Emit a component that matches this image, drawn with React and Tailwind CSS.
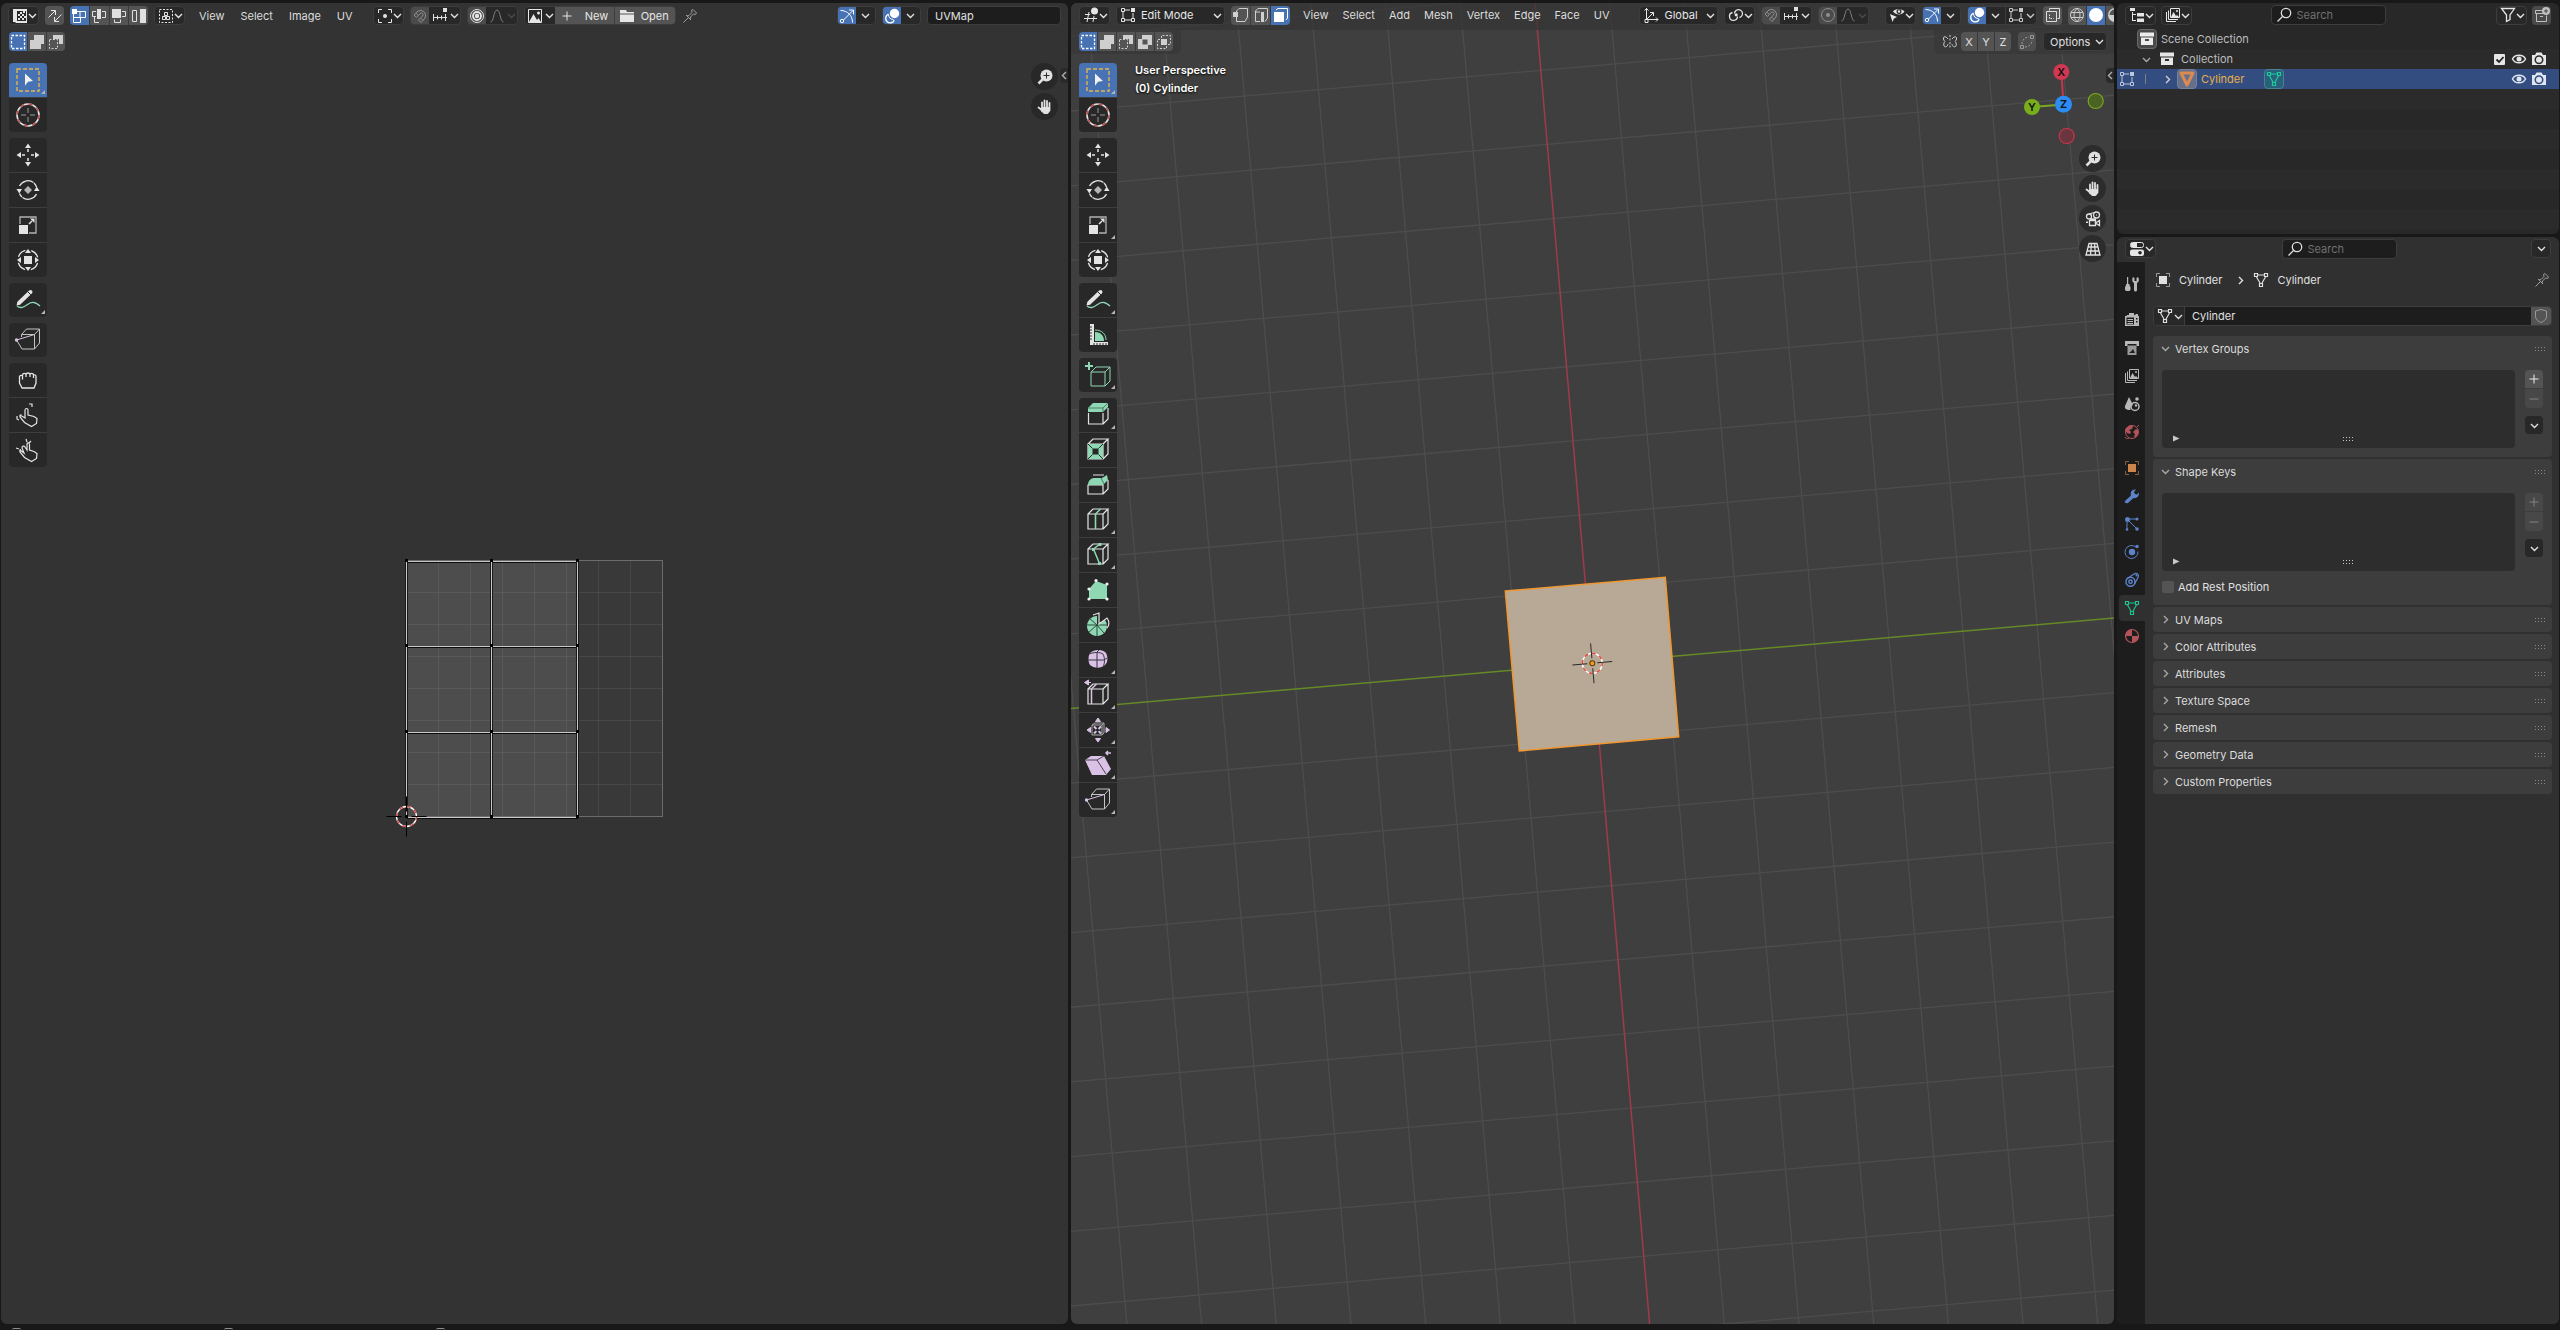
import React from "react";

const F = { fill: "currentColor", stroke: "none" };

const ICONS = {
  uvEditor: (
    <>
      <path {...F} d="M1 1h4v14H3.500v-1H1zM5 1h10v2H5zM5 13h10v2H5zM14 1h1v14h-1z" />
      <path {...F} d="M8 4h2v2H8zM11 3h2v2h-2zM6 6h2v2H6zM10 6h2v2h-2zM8 8h2v2H8zM12 8h2v2h-2zM6 10h2v2H6zM10 10h2v2h-2z" />
    </>
  ),
  sync: <path d="M1.500 9.500L8 3M4 2.500h4.500V7M14.500 6.500L8 13M12 13.500H7.500V9" />,
  uvVertex: (
    <>
      <path {...F} d="M1 1h5v5H1z" />
      <path d="M6 3.500h8.500v6H9.500v5h-7V6M2.500 9.500h7M9 3.500v6" />
    </>
  ),
  uvEdge: (
    <>
      <path {...F} d="M6 1h4v10H6z" />
      <path d="M5 3.500H1.500v5H5M3.500 8.500v6h4.500M11 3.500h3.500v6H11" />
    </>
  ),
  uvFace: (
    <>
      <path {...F} d="M1 1h9v9H1z" />
      <path d="M11 3.500h3.500v5H11M3.500 11.500v3h6v-3" />
    </>
  ),
  uvIsland: (
    <>
      <path {...F} d="M9 1h6v14H9z" />
      <path d="M1.500 2.500h4v11h-4z" />
    </>
  ),
  sticky: (
    <>
      <path d="M1.500 1.500h13v13h-13z" strokeDasharray="2 1.500" />
      <path d="M6.500 4.500h3v3h-3zM4.500 8.500h3v3h-3zM8.500 8.500h3v3h-3z" />
    </>
  ),
  pivot: (
    <>
      <path d="M1.500 5V1.500H5M11 1.500h3.500V5M14.500 11v3.500H11M5 14.500H1.500V11" />
      <circle {...F} cx="8" cy="8" r="2" />
    </>
  ),
  magnet: <path d="M2 7l4-4a5.200 5.200 0 0 1 7 7l-4 4.500-2.500-2.500 4-4a1.700 1.700 0 0 0-2.500-2.500L4.500 9.500zM4 5.200l2.300 2.300M8.500 10l2.500 2.500" />,
  increment: (
    <>
      <path {...F} d="M11 0h4v4h-4z" />
      <path d="M1 9.500h14M1.500 6v7M5.500 7.500v4M9.500 7.500v4M13.500 6v7" />
    </>
  ),
  target: (
    <>
      <circle cx="8" cy="8" r="6.500" />
      <circle cx="8" cy="8" r="4" strokeWidth="1.800" />
      <circle {...F} cx="8" cy="8" r="2.200" />
    </>
  ),
  dotCircle: (
    <>
      <circle cx="8" cy="8" r="6.500" />
      <circle {...F} cx="8" cy="8" r="2" />
    </>
  ),
  falloff: <path d="M1.500 14c3.500 0 3-12 6.500-12s3 12 6.500 12" />,
  image: (
    <>
      <path d="M1.500 1.500h13v13h-13z" />
      <path {...F} d="M2 14l4.500-8L10 12l1.500-2L14 14z" />
      <circle {...F} cx="11.500" cy="5" r="1.500" />
    </>
  ),
  plus: <path d="M8 3.500v9M3.500 8h9" />,
  minus: <path d="M3.500 8h9" />,
  folder: <path {...F} d="M1 2h6l1 2h7v1.500H1zM1 6.500h14V14H1z" />,
  pin: <path d="M1.500 14.500l4.500-4.500M4 7l5 5M5 8l2-.5 3-3-.5-2L11 1.500 14.500 5l-1 1.500-2-.5-3 3L8 11" />,
  gizmo: (
    <>
      <path d="M1.500 2.500c7 0 12 5 12 12M4.500 12L14 2.500M10 2h4.500v4.500" />
      <circle cx="3" cy="13" r="1.700" />
    </>
  ),
  overlay: (
    <>
      <circle {...F} cx="10.500" cy="5.500" r="4.700" />
      <path d="M4.500 6.200a4.500 4.500 0 1 0 5.800 6" strokeWidth="1.400" />
      <path d="M4.500 6.500c0 3 2 5 5 5" />
    </>
  ),
  view3d: (
    <>
      <path d="M2 7.500h5M1 11.500h13M6 5L4 15M11 9l-1 6" />
      <circle {...F} cx="11.500" cy="4" r="3.500" />
    </>
  ),
  editMode: (
    <>
      <path {...F} d="M11 1h4v4h-4z" />
      <path d="M1.500 1.500h3v3h-3zM1.500 11.500h3v3h-3zM11.500 11.500h3v3h-3zM5 3h5M3 5v6M5 13h6M13 6v5" />
    </>
  ),
  selVertex: (
    <>
      <path {...F} d="M0 5h5v5H0z" />
      <path d="M3.500 5V4l2.500-2.500h8.500V10L12 14.500H3.500V10" />
    </>
  ),
  selEdge: (
    <>
      <path {...F} d="M8 5h3v10H8z" />
      <path d="M7 14.500H2.500V4L5 1.500h9.500V11L12 14.500M2.500 5H7" />
    </>
  ),
  selFace: (
    <>
      <path {...F} d="M1 5h10v10H1z" />
      <path d="M3 3l2-1.500h9.500V11L13 13" />
    </>
  ),
  modeSet: <path d="M1.500 1.500h13v13h-13z" strokeDasharray="2.500 1.500" strokeWidth="1.300" />,
  modeExtend: <path {...F} d="M5 1h10v9h-3v5H1V6h4z" />,
  modeSubtract: (
    <>
      <path {...F} d="M5 1h10v9h-4V5H5z" />
      <path d="M1.500 5.500h8v9h-8z" strokeDasharray="2 1.500" />
    </>
  ),
  modeInvert: <path {...F} fillRule="evenodd" d="M5 1h10v10h-4v4H1V5h4zM5.500 5.500h5v5h-5z" />,
  modeIntersect: (
    <>
      <path {...F} d="M5 5h6v6H5z" />
      <path d="M5.500 4V1.500h9v9H12M4 5.500H1.500v9h9V12" strokeDasharray="2 1.500" />
    </>
  ),
  axes: <path d="M3.500 1v11.500H15M1.500 3.500l2-2 2 2M13 10.500l2 2-2 2M3.500 12.500l7-7M7 5.500h3.500V9M2 12.500h3v3H2z" />,
  link: (
    <>
      <path d="M6.500 6.500a4 4 0 0 1 1-2.500 4 4 0 1 1 4 6.500M9.500 9.500a4 4 0 1 1-5-4" strokeWidth="1.300" />
      <circle {...F} cx="8.200" cy="7.800" r="1.600" />
    </>
  ),
  visibility: (
    <>
      <path {...F} fillRule="evenodd" d="M4 4.500C6 1 13 1 15.500 4.500 13 8.500 7 8.500 4 4.500zM7.500 4.500a2.500 2.500 0 1 0 5 0 2.500 2.500 0 1 0-5 0z" />
      <circle {...F} cx="10" cy="4.500" r="1.200" />
      <path {...F} d="M1 7l7 3-3 1.500L3.500 15z" />
    </>
  ),
  xray: (
    <>
      <path d="M4.500 3.500v-2h10v10h-2M1.500 4.500h10v10h-10z" />
      <path d="M4.500 7.500v4h4" strokeDasharray="1.500 1" />
    </>
  ),
  wire: <path d="M8 1.500a6.500 6.500 0 1 0 0 13 6.500 6.500 0 1 0 0-13zM8 1.500c-4 3-4 10 0 13M8 1.500c4 3 4 10 0 13M2 5.500h12M2 10.500h12" />,
  solid: <circle {...F} cx="8" cy="8" r="7" />,
  material: <path {...F} fillRule="evenodd" d="M8 1a7 7 0 1 0 0 14A7 7 0 1 0 8 1zM8 2.500V8H2.500A5.500 5.500 0 0 1 8 2.500z" />,
  butterfly: (
    <>
      <path d="M6 5C4 2 1 2 1.500 5c.2 1.500 1.500 2.500 1.500 2.500S1 9 2 12c1.500 2 4 0 4-2M10 5c2-3 5-3 4.500 0-.2 1.500-1.500 2.500-1.500 2.500S15 9 14 12c-1.500 2-4 0-4-2" />
      <path d="M8 1v14" strokeDasharray="2 1.500" />
    </>
  ),
  topology: (
    <>
      <path d="M11.500 1.500h3v3h-3zM1.500 11.500h3v3h-3z" />
      <path d="M3 10c0-4 3-7 7-7M6 13c4 0 7-3 7-7" strokeDasharray="2 1.500" />
    </>
  ),
  outliner: <path {...F} d="M1 1h5v3H1zM3 5h1v9H3zM4 7h3v1H4zM4 13h3v1H4zM8 6h7v3.500H8zM8 11.500h7V15H8z" />,
  viewLayer: (
    <>
      <path d="M1.500 5v9.500H11M3.500 3.500v9H13M5.500 1.500h9v9h-9z" />
      <path {...F} d="M6 10l2.500-5L11 9l1-1 2 2z" />
      <circle {...F} cx="12" cy="4" r="1" />
    </>
  ),
  search: (
    <>
      <circle cx="10" cy="6" r="4.700" strokeWidth="1.300" />
      <path d="M6.500 9.500l-5 5" strokeWidth="1.300" />
    </>
  ),
  filter: <path d="M1.500 1.500h13L10 8v4.500l-3.500 2V8z" strokeWidth="1.300" />,
  newCollection: (
    <>
      <path d="M8 3.500H1.500v3H10M2.500 6.500v8h10v-6M6 9.500h3" />
      <circle {...F} cx="12" cy="4" r="4" />
      <path d="M12 2v4M10 4h4" stroke="#4a4a4a" />
    </>
  ),
  collection: <path {...F} fillRule="evenodd" d="M1 1.500h14v4H1zM2 6.500h12V14H2zM6 8v2h4V8z" />,
  object: <path d="M2 2h12L8 14z" strokeWidth="3" strokeLinejoin="round" />,
  mesh: <path d="M1.500 1.500h3v3h-3zM11.500 1.500h3v3h-3zM6.500 11.500h3v3h-3zM5 3h6M3.500 5l3.500 6M12.500 5L9 11" strokeWidth="1.200" />,
  eye: (
    <>
      <path d="M1.500 8C4 3 12 3 14.500 8 12 13 4 13 1.500 8z" strokeWidth="1.500" />
      <circle {...F} cx="8" cy="8" r="2.500" />
    </>
  ),
  camera: (
    <>
      <path {...F} fillRule="evenodd" d="M1 4h3l1.500-2.500h5L12 4h3v10H1zM8 4.300a4.500 4.500 0 1 0 0 9 4.500 4.500 0 1 0 0-9z" />
      <circle {...F} cx="8" cy="8.800" r="3" />
    </>
  ),
  properties: (
    <>
      <rect x="1.500" y="1.500" width="13" height="5" rx="2" />
      <path {...F} d="M2 2h6v4H2z" />
      <rect {...F} x="1" y="8.500" width="14" height="6.500" rx="2" />
      <circle cx="11" cy="11.700" r="1.800" fill="#222" stroke="none" />
    </>
  ),
  objectBox: (
    <>
      <path d="M1.500 5V1.500H5M11 1.500h3.500V5M14.500 11v3.500H11M5 14.500H1.500V11" opacity="0.600" />
      <path {...F} d="M4 4h8v8H4z" />
    </>
  ),
  tool: (
    <>
      <path {...F} d="M3 1h1.200v7H5.500v1.500C7 11 7 14 5.500 15H2c-1.500-1-1.500-4 0-5.500V8h1z" />
      <path {...F} d="M9 1l1.500 1v3h2V2L14 1c1.500 2 1.200 5-1 6v7a1.500 1.500 0 0 1-3 0V7C8 6 7.700 3 9 1z" />
    </>
  ),
  render: <path {...F} fillRule="evenodd" d="M5 1h5v2h1.500V2H14v2h1v10H1V4h1.500L3 3h2zM2.500 5.500v7H10v-7zM3.500 7h5.500v1H3.500zM3.500 9h5.500v1H3.500zM3.500 11h5.500v1H3.500zM12 6h1.500v1.500H12zM12 9h1.500v1.500H12z" />,
  output: (
    <>
      <path {...F} d="M1 1h14v5h-2.500V4h-9v2H1z" />
      <path {...F} opacity="0.800" fillRule="evenodd" d="M3.500 5.500h9V15h-9zM5 13h6L9 9l-1.500 2z" />
    </>
  ),
  scene: (
    <>
      <path {...F} d="M5 1l4 8c-2 1-3 3-2.500 5C4 14.500 0 13 1 10z" />
      <circle cx="11" cy="10.500" r="4" strokeWidth="1.500" />
      <circle {...F} cx="13" cy="3" r="1.800" />
      <circle {...F} cx="12" cy="9.500" r="1.200" />
    </>
  ),
  world: (
    <>
      <circle cx="8" cy="8" r="6.500" />
      <path {...F} d="M2 4l4-3 3 1-1 3-3 1 2 2-1 2-3-1-2-3zM9 8l3-3 2 1v4l-2 3h-2l1-3z" />
      <path d="M1 13c1 2 2 2 4 1M15 1l-2 2" />
    </>
  ),
  modifier: <path {...F} d="M1 13l6-5.500C6 4 8 1 12 1.500L10 4l1 2 2 .5 2-2c.5 4-3 6.500-5.500 5.500L4 15c-2 1-4-.5-3-2z" />,
  particles: (
    <>
      <circle {...F} cx="3.500" cy="3.500" r="2.500" />
      <circle {...F} cx="13" cy="3" r="1.500" />
      <circle {...F} cx="13" cy="13" r="1.800" />
      <circle {...F} cx="3" cy="13.500" r="1.300" />
      <path d="M6 3h6M5 5l7 7M3 6v7" />
    </>
  ),
  physics: (
    <>
      <path d="M11 2.500a6.500 6.500 0 1 0 3 5" />
      <circle {...F} cx="8" cy="8" r="3.200" />
      <circle {...F} cx="13" cy="2.500" r="1.800" />
    </>
  ),
  constraint: (
    <>
      <path d="M2.500 7L10 2c3-1.500 5.500 1 4 3.500L10.500 12" strokeWidth="1.300" />
      <circle cx="6.500" cy="9.800" r="4.500" strokeWidth="1.500" />
      <circle cx="6.500" cy="9.800" r="1.700" strokeWidth="1.500" />
      <circle {...F} cx="12.500" cy="3.500" r="1" />
    </>
  ),
  materialTab: (
    <>
      <circle cx="8" cy="8" r="6.500" strokeWidth="1.200" />
      <path {...F} d="M8 1.500V8H1.500A6.500 6.500 0 0 1 8 1.500zM8 8h6.500A6.500 6.500 0 0 1 8 14.500z" />
    </>
  ),
  shield: <path d="M8 1.500l5.500 1.500v5.500c0 3-3 5-5.500 6-2.500-1-5.500-3-5.500-6V3z" />,
  zoom: (
    <>
      <circle {...F} cx="9.500" cy="6.500" r="6" />
      <path d="M6 10l-4.500 4.500" strokeWidth="2.500" />
      <path d="M9.500 3.500v6M6.500 6.500h6" stroke="#2a2a2a" />
    </>
  ),
  hand: (
    <path
      d="M5 9.500V3.500M7.500 9V1.500M10 9V2M12.500 9.500V4M4.800 11L1.500 8.500M5 9h7.500v2.500L10.500 14h-3L4.500 11.500z"
      fill="currentColor"
      strokeWidth="1.800"
      strokeLinecap="round"
      strokeLinejoin="round"
    />
  ),
  cameraView: (
    <>
      <circle cx="4" cy="5.500" r="2.500" strokeWidth="1.300" />
      <circle cx="11.500" cy="4" r="3" strokeWidth="1.300" />
      <path d="M4 3l7-2M5 8h6M4.500 9.500h6v5h-6zM10.500 12l4-2.500v5z" strokeWidth="1.300" />
      <path {...F} d="M1 10.500h2v1.500H1zM11 3.500h1v1h-1z" />
    </>
  ),
  perspective: <path d="M4 2.500h8l3 11.500H1zM3 6h10M2 10h12M6.500 2.500L5.500 14M9.500 2.500L10.500 14" strokeWidth="1.300" />,
};

function Icon({ name, className = "" }) {
  return (
    <svg
      viewBox="0 0 16 16"
      className={`size-4 shrink-0 ${className}`}
      fill="none"
      stroke="currentColor"
      strokeWidth="1"
      aria-hidden="true"
    >
      {ICONS[name]}
    </svg>
  );
}

function Chevron({ dir = "down", className = "" }) {
  const paths = { down: "M1 3l3.500 3.500L8 3", right: "M3 1l3.500 3.500L3 8", left: "M6 1L2.500 4.500 6 8" };
  return (
    <svg
      viewBox="0 0 9 9"
      className={`size-[9px] shrink-0 ${className}`}
      fill="none"
      stroke="currentColor"
      strokeWidth="1.400"
      aria-hidden="true"
    >
      <path d={paths[dir]} />
    </svg>
  );
}

const BOX = "flex h-[19px] shrink-0 items-center overflow-hidden rounded-[4px] border border-[#3d3d3d] bg-[#282828]";

function MenuButton({ icon, label, className = "" }) {
  return (
    <button aria-label={label} className={`${BOX} w-[31px] justify-between pr-px pl-[3px] text-[#e6e6e6] ${className}`}>
      <Icon name={icon} />
      <Chevron />
    </button>
  );
}

function TogglePair({ icon, label, on, dim, second, secondDim }) {
  return (
    <div className={BOX}>
      <button
        aria-label={label}
        aria-pressed={!!on}
        className={`flex h-full w-[18px] items-center justify-center ${on ? "bg-[#4772b3] text-white" : "bg-[#4b4b4b]"} ${dim ? "text-[#8f8f8f]" : "text-[#e6e6e6]"}`}
      >
        <Icon name={icon} />
      </button>
      <button
        aria-label={`${label} options`}
        className={`flex h-full items-center ${second ? "w-[31px] justify-between pr-px pl-[3px]" : "w-[19px] justify-center"} ${secondDim ? "text-[#7d7d7d]" : "text-[#e0e0e0]"}`}
      >
        {second && <Icon name={second} />}
        <Chevron className={secondDim ? "opacity-40" : ""} />
      </button>
    </div>
  );
}

function Segments({ items, active = 0, wide }) {
  return (
    <div className="flex h-[19px] shrink-0 gap-px overflow-hidden rounded-[4px] bg-[#3a3a3a]">
      {items.map((it, i) => (
        <button
          key={it}
          aria-label={it}
          aria-pressed={i === active}
          className={`flex shrink-0 items-center justify-center ${wide ? "w-[19px]" : "w-[18px]"} ${i === active ? "bg-[#4772b3] text-white" : "bg-[#545454] text-[#cfcfcf]"}`}
        >
          <Icon name={it} />
        </button>
      ))}
    </div>
  );
}

function Menus({ items, tight }) {
  return (
    <nav className="flex items-center">
      {items.map((m) => (
        <button key={m} className={`text-[#dcdcdc] ${tight ? "px-[7px]" : "px-2"}`}>
          {m}
        </button>
      ))}
    </nav>
  );
}

/* ---------- tool shelf drawings, 26 x 26 ---------- */
const W = "#e4e4e4";
const G = "#8fd8b4";
const P = "#d9c2e6";
const CUBE = "M3 7h15v15H3zM3 7l5-5h15l-5 5M23 2v15l-5 5";

const TOOLS = {
  Select: (
    <>
      <path d="M2 2h22v22H2z" stroke="#e8b34c" strokeWidth="1.400" strokeDasharray="4 2" />
      <path d="M10 6.500l8 7.500-5 .7-3 4z" fill="#f0f0f0" stroke="none" />
    </>
  ),
  Cursor: (
    <>
      <circle cx="13" cy="13" r="11" strokeWidth="1.600" />
      <circle cx="13" cy="13" r="11" stroke="#b9524f" strokeWidth="1.600" strokeDasharray="4.320 4.320" />
      <path d="M6 13h5M15 13h5M13 6v5M13 15v5" stroke="#999" />
    </>
  ),
  Move: (
    <>
      <path d="M13 1.500l3 4.500h-6zM13 24.500l3-4.500h-6zM1.500 13l4.500-3v6zM24.500 13l-4.500-3v6z" fill={W} stroke="none" />
      <path d="M13 7v3M13 16v3M7 13h3M16 13h3" strokeWidth="1.500" />
    </>
  ),
  Rotate: (
    <>
      <path d="M4.500 9a9.500 9.500 0 0 1 14-3.500M21.500 17a9.500 9.500 0 0 1-14 3.500M19 6a9.500 9.500 0 0 1 2.500 4M4.500 16.500a9.500 9.500 0 0 0 2.500 3.500" strokeWidth="1.300" />
      <path d="M1.500 12h5.500l-2.700 4.500zM19 14h5.500L21.700 9.500z" fill={W} stroke="none" />
      <path d="M13 9l4 4-4 4-4-4z" fill="#b5b5b5" stroke="none" />
    </>
  ),
  Scale: (
    <>
      <path d="M5 12V5h16v16h-7" stroke="#b0b0b0" strokeWidth="1.300" />
      <path d="M4 13h9v9H4z" fill={W} stroke="none" />
      <path d="M14 12l3-3" strokeWidth="1.500" />
      <path d="M19.500 6.500v4.500l-4.500-4.500z" fill={W} stroke="none" />
    </>
  ),
  Transform: (
    <>
      <circle cx="13" cy="13" r="10" strokeWidth="1.300" strokeDasharray="9.700 6" strokeDashoffset="-3" />
      <path d="M9 9h8v8H9z" fill={W} stroke="none" />
      <path d="M13 2l3 4h-6zM13 24l3-4h-6zM2 13l4-3v6zM24 13l-4-3v6z" fill={W} stroke="none" />
    </>
  ),
  Annotate: (
    <>
      <path d="M2 19c5 4 9-1 13-3s7 0 10 3" stroke={G} strokeWidth="1.300" />
      <path d="M4.500 15.500L15.500 5" strokeWidth="4" strokeLinecap="round" />
      <path d="M1.500 18.500l1-4 3 3z" fill={W} stroke="none" />
      <path d="M13 5l3 3" stroke="#282828" />
    </>
  ),
  Rip: (
    <>
      <path d="M6.500 10v-2.500l5-5.500h13v14l-5 6H7l-5.500-9M19.500 22V7.500l5-5.500M6.500 7.500h13" stroke="#c4c4c4" />
      <path d="M1.500 13L19.500 7.500" stroke={P} />
      <circle cx="1.500" cy="13" r="1.700" fill={P} stroke="none" />
    </>
  ),
  Grab: <path d="M7 21l-2.500-5V9.500C5 8 7 8 7.500 9V8c.5-2 3-2 3.500-.5.500-2 3.500-2 4 0 .5-1.500 3-1.500 3.500.5 1-.5 2.500 0 2.500 1.500V16l-2 5zM7.500 9v3.500M11 7.500V10M15 7.500V10M18.500 8.500V11" strokeWidth="1.300" />,
  Relax: <path d="M5 13l5 3V8c.3-2 3-2 3 0v5l6 1.500 3 2-.5 5-5 3-7-4-4.500-5.500c-.5-1.500.500-2.500 1.500-2M14 2h3v3M2 14v3l2 1" strokeWidth="1.200" />,
  Pinch: <path d="M5 13l4 3-2-5c0-2 2-2.500 3-1l2 3V7c.5-1.500 2.500-1.500 2.500.5V13l4.500 1.500 3 2-.5 5-5 3-7-4-4.500-5.500c-.5-1.500 0-2.500 1-2.500M11 2l1 3M16 4l-2 2M1 11l3 1" strokeWidth="1.200" />,
  Measure: (
    <>
      <path d="M5 2h4v18h14v3H5z" fill={W} stroke="none" />
      <path d="M5 5h2M5 8h2M5 11h2M5 14h2M5 17h2M9 23v-2M12 23v-2M15 23v-2M18 23v-2M21 23v-2" stroke="#333" />
      <path d="M10 10c6 0 9 4 9 9h-9z" fill={G} stroke="none" />
      <path d="M10 8c7 0 11 4 11 10" stroke={G} />
    </>
  ),
  "Add Cube": (
    <>
      <path d="M6 10h14v14H6zM6 10l5-5h14l-5 5M25 5v14l-5 5" stroke={G} />
      <path d="M4 0v8M0 4h8" stroke={G} strokeWidth="2" />
    </>
  ),
  Extrude: (
    <>
      <path d="M3.500 11v11h14.500V11M18 22l5-5V6" strokeWidth="1.200" />
      <path d="M3 6l5-5h15v4l-5 5H3z" fill={G} stroke="none" />
      <path d="M3 6h15l5-5M18 6v4" stroke="#4c7f66" />
    </>
  ),
  Inset: (
    <>
      <path d={CUBE} strokeWidth="1.200" />
      <path d="M3 7h15v15H3zM7.500 11.500v6h6v-6z" fill={G} fillRule="evenodd" stroke="none" />
      <path d="M3 7l4.500 4.500M18 7l-4.500 4.500M3 22l4.500-4.500M18 22l-4.500-4.500" stroke="#282828" />
    </>
  ),
  Bevel: (
    <>
      <path d="M3 13h15v9H3zM18 22l5-5V8M8 3h11" strokeWidth="1.200" />
      <path d="M3 13c0-4 3-7 6-7h8l5-3 1 5-5 5z" fill={G} stroke="none" />
      <path d="M16 6l3 6" stroke="#4c7f66" />
    </>
  ),
  "Loop Cut": (
    <>
      <path d={CUBE} strokeWidth="1.200" />
      <path d="M10.500 22V7l5-5" stroke={G} strokeWidth="1.600" />
    </>
  ),
  Knife: (
    <>
      <path d={CUBE} strokeWidth="1.200" />
      <path d="M15 2L8.500 7l6 14.500" stroke={G} strokeWidth="1.500" />
      <path d="M13.500 1h3v3h-3zM7 6h3v3H7zM13 20h3v3h-3z" fill={G} stroke="none" />
    </>
  ),
  "Poly Build": (
    <>
      <path d="M4 22V12l7-8 11 4v14z" fill={G} stroke="none" />
      <g fill="#f2f2f2" stroke="none">
        <circle cx="4" cy="22" r="1.600" /><circle cx="4" cy="12" r="1.600" /><circle cx="11" cy="3.500" r="1.600" />
        <circle cx="22" cy="7" r="1.600" /><circle cx="22" cy="22" r="1.600" />
      </g>
    </>
  ),
  Spin: (
    <>
      <path d="M12 13V4a10 10 0 1 0 8 4z" fill={G} stroke="none" />
      <path d="M12 13v11M12 13H1M12 13l7 8M12 13l-8 7M12 13L4 6M12 13h10" stroke="#2a4a3a" />
      <path d="M8 3l6-2v11l8-6c3 4 2 8 0 10" strokeWidth="1.200" />
    </>
  ),
  Smooth: (
    <>
      <path d="M5 6c4-4 13-4 16 0 2 4 2 9-1 12-4 4-12 3-15 0-2-3-2-9 0-12z" fill={P} stroke="none" />
      <path d="M12 5v16M3 13h16l3-2M4 7c5-2 11-2 14 0 2 4 2 9 0 13M12 5l2-2" stroke="#3a3340" />
    </>
  ),
  "Edge Slide": (
    <>
      <path d={CUBE} strokeWidth="1.200" />
      <path d="M6.500 22V7l5-5" stroke={P} strokeWidth="1.500" />
      <path d="M-.5 .5l4-2.500v5zM3.500 .5H6" fill={P} stroke={P} />
    </>
  ),
  "Shrink/Fatten": (
    <>
      <path d="M7 8h10v10H7zM7 8l3-2h9l-2 2M19 6v10l-2 2" stroke="#a9a9a9" />
      <path d="M13 1l2.500 3.500h-5zM13 25l2.500-3.500h-5zM2 13l3.500-2.500v5zM24.500 13L21 10.500v5z" fill={P} stroke={P} />
      <path d="M9 9.500l7 7M16 9.500l-7 7" stroke={P} strokeWidth="2" strokeDasharray="3.500 3" />
    </>
  ),
  Shear: (
    <>
      <path d="M0 8l6-4h13l7 13-5 6H7z" fill={P} stroke="none" />
      <path d="M0 8h12l7-4M12 8l9 14" stroke="#4b4152" />
      <path d="M26 1h-5M23 -1l-2 2 2 2" stroke={P} strokeWidth="1.500" />
    </>
  ),
};

function ToolShelf({ groups }) {
  return (
    <div className="flex w-[38px] flex-col gap-1.5">
      {groups.map((g, gi) => (
        <div key={gi} className="flex flex-col gap-px overflow-hidden rounded-[4px] bg-[#3d3d3d]">
          {g.map(([name, more]) => (
            <button
              key={name}
              aria-label={name}
              className={`relative flex h-[34px] items-center justify-center ${name === "Select" ? "bg-[#4772b3]" : "bg-[#282828]"}`}
            >
              <svg viewBox="0 0 26 26" className="size-[26px] overflow-visible" fill="none" stroke={W} strokeWidth="1" aria-hidden="true">
                {TOOLS[name]}
              </svg>
              {more && (
                <svg viewBox="0 0 4 4" className="absolute right-[2px] bottom-[3px] size-1" aria-hidden="true">
                  <path d="M4 0v4H0z" fill="#b5b5b5" />
                </svg>
              )}
            </button>
          ))}
        </div>
      ))}
    </div>
  );
}

function NavButton({ icon, tone }) {
  return (
    <button
      aria-label={icon}
      className={`flex size-[27px] items-center justify-center rounded-full text-[#e0e0e0] ${tone}`}
    >
      <Icon name={icon} />
    </button>
  );
}

function CollapseTab() {
  return (
    <button
      aria-label="Toggle sidebar"
      className="absolute top-[65px] right-0 flex h-[15px] w-2 items-center justify-center rounded-l-[4px] bg-[#2a2a2a] text-[#b0b0b0]"
    >
      <Chevron dir="left" />
    </button>
  );
}

function UvCanvas() {
  const steps = [1, 2, 3, 4, 5, 6, 7];
  return (
    <svg className="absolute inset-0 size-full" aria-hidden="true">
      <g transform="translate(405.500 557.500)" shapeRendering="crispEdges">
        <rect width="256" height="256" fill="#393939" />
        <rect width="171" height="256" fill="#4d4d4d" />
        {steps.map((s) => (
          <path key={s} d={`M${s * 32} 0V256M0 ${s * 32}H256`} stroke="#fff" strokeOpacity="0.070" fill="none" />
        ))}
        <rect width="256" height="256" fill="none" stroke="#6c6c6c" />
        {[0, 85, 171, 256].map((y) => (
          <g key={y}>
            <path d={`M0 ${y + 1.500}H171`} stroke="#0c0c0c" strokeWidth="2" />
            <path d={`M0 ${y + 0.500}H171`} stroke="#c8c8c8" />
          </g>
        ))}
        {[0, 85, 171].map((x) => (
          <g key={x}>
            <path d={`M${x} 0V256`} stroke="#1a1a1a" strokeWidth="3" />
            <path d={`M${x} 0V256`} stroke="#c8c8c8" />
          </g>
        ))}
        {[0, 85, 171].map((x) => [0, 85, 171, 256].map((y) => <rect key={`${x}-${y}`} x={x - 1.500} y={y - 1.500} width="3" height="3" fill="#000" />))}
      </g>
      <g transform="translate(405.500 813.500)" fill="none">
        <circle r="10" stroke="#fff" strokeWidth="1.300" />
        <circle r="10" stroke="#d8453c" strokeWidth="1.300" strokeDasharray="3.930 3.930" />
        <path d="M-20 0H-5M5 0H20M0 -20V-5M0 5V20" stroke="#000" />
      </g>
    </svg>
  );
}

function ViewportCanvas() {
  const n = Array.from({ length: 31 }, (_, i) => i - 15).filter((i) => i !== 0);
  return (
    <svg className="absolute inset-0 size-full" aria-hidden="true">
      <g transform="translate(521.300 660.300) rotate(-4.960)" fill="none">
        {n.map((i) => (
          <path key={i} d={`M${i * 74.4} -1200V1200M-1200 ${i * 74.4}H1200`} stroke="#4d4d4d" strokeWidth="1.300" />
        ))}
        <path d="M0 -1200V1200" stroke="#a03a4c" strokeWidth="1.500" />
        <path d="M-1200 0H1200" stroke="#648a26" strokeWidth="1.500" />
      </g>
      <path d="M434.300 588L594.300 574.300 607.700 733.700 448.300 748z" fill="#b8a996" stroke="#ef9730" strokeWidth="1.500" />
      <g transform="translate(521.300 660.300) rotate(-4.960)" fill="none">
        <circle r="10" stroke="#fff" strokeWidth="1.500" />
        <circle r="10" stroke="#dd4c40" strokeWidth="1.500" strokeDasharray="3.930 3.930" />
        <path d="M-20 0H-5M5 0H20M0 -20V-5M0 5V20" stroke="#2a2a2a" />
        <circle r="2.500" fill="#f39a1e" stroke="#5a3a10" />
      </g>
    </svg>
  );
}

function AxisGizmo() {
  return (
    <svg viewBox="0 1 84 82" className="h-[82px] w-[84px]" aria-hidden="true">
      <path d="M41.500 42.500L39.300 10" stroke="#c9344c" strokeWidth="2" />
      <path d="M41.500 42.500L10 45" stroke="#78a81c" strokeWidth="2" />
      <circle cx="73.700" cy="39" r="7.500" fill="#4a6325" stroke="#78a81c" strokeWidth="1.200" />
      <circle cx="44.700" cy="74" r="7.500" fill="#6b3540" stroke="#c9344c" strokeWidth="1.200" />
      <circle cx="39.300" cy="10" r="8" fill="#cf3850" />
      <circle cx="10" cy="45" r="8" fill="#78ad1c" />
      <circle cx="41.500" cy="42.300" r="8.500" fill="#2b8cf4" />
      <g fontFamily="Inter, sans-serif" fontSize="11" fontWeight="600" textAnchor="middle" fill="#111">
        <text x="39.300" y="14">X</text>
        <text x="10" y="49">Y</text>
        <text x="41.500" y="46.300">Z</text>
      </g>
    </svg>
  );
}

function UvEditor() {
  return (
    <section className="relative flex min-w-0 flex-col overflow-hidden rounded-md bg-[#333333]">
      <UvCanvas />
      <header className="relative flex items-center gap-1.5 px-[7px] pt-[3px]">
        <MenuButton icon="uvEditor" label="Editor type" />
        <button aria-label="Sync selection" className="flex h-[19px] w-[19px] items-center justify-center rounded-[4px] bg-[#545454] text-[#e6e6e6]">
          <Icon name="sync" />
        </button>
        <div className="grid h-[19px] w-[78px] grid-cols-4 gap-px overflow-hidden rounded-[4px] bg-[#3a3a3a]">
          {["uvVertex", "uvEdge", "uvFace", "uvIsland"].map((n, i) => (
            <button key={n} aria-label={n} className={`flex items-center justify-center ${i === 0 ? "bg-[#4772b3] text-white" : "bg-[#545454] text-[#e0e0e0]"}`}>
              <Icon name={n} />
            </button>
          ))}
        </div>
        <MenuButton icon="sticky" label="Sticky selection mode" />
        <Menus items={["View", "Select", "Image", "UV"]} />
        <MenuButton icon="pivot" label="Pivot" className="ml-1.5" />
        <TogglePair icon="magnet" label="Snap" dim second="increment" />
        <TogglePair icon="target" label="Proportional editing" second="falloff" secondDim />
        <div className={BOX}>
          <button aria-label="Browse image" className="flex w-[30px] items-center justify-between pr-px pl-[2px] text-[#e6e6e6]">
            <Icon name="image" />
            <Chevron />
          </button>
          <button className="flex h-full w-[60px] items-center gap-[10px] border-r border-[#3d3d3d] bg-[#545454] pl-1 text-[#e6e6e6]">
            <Icon name="plus" />
            New
          </button>
          <button className="flex h-full w-[60px] items-center gap-[6px] bg-[#545454] pl-1 text-[#e6e6e6]">
            <Icon name="folder" />
            Open
          </button>
        </div>
        <button aria-label="Pin" className="text-[#a0a0a0]">
          <Icon name="pin" />
        </button>
        <div className="ml-auto flex gap-1.5">
          <TogglePair icon="gizmo" label="Gizmos" on />
          <TogglePair icon="overlay" label="Overlays" on />
          <input aria-label="UV map" defaultValue="UVMap" className="h-[19px] w-[134px] rounded-[4px] border border-[#3d3d3d] bg-[#1d1d1d] px-[7px] text-[#e0e0e0] outline-none" />
        </div>
      </header>
      <div className="relative mt-[7px] flex px-2">
        <Segments items={["modeSet", "modeExtend", "modeSubtract"]} />
      </div>
      <div className="relative flex items-start justify-between pt-3 pr-[10px] pl-2">
        <ToolShelf
          groups={[
            [["Select", true], ["Cursor"]],
            [["Move"], ["Rotate"], ["Scale"], ["Transform"]],
            [["Annotate", true]],
            [["Rip"]],
            [["Grab"], ["Relax"], ["Pinch"]],
          ]}
        />
        <div className="flex flex-col gap-[3px]">
          <NavButton icon="zoom" tone="bg-[#282828]" />
          <NavButton icon="hand" tone="bg-[#282828]" />
        </div>
      </div>
      <CollapseTab />
    </section>
  );
}

function Dropdown({ icon, label, value, className }) {
  return (
    <div className={`${BOX} justify-between pr-[2px] pl-[3px] text-[#e6e6e6] ${className}`}>
      <Icon name={icon} />
      <select aria-label={label} defaultValue={value} className="min-w-0 flex-1 appearance-none bg-transparent pl-[5px] outline-none">
        <option>{value}</option>
      </select>
      <Chevron />
    </div>
  );
}

function Viewport() {
  return (
    <section className="relative flex min-w-0 flex-col overflow-hidden rounded-md bg-[#3f3f3f]">
      <ViewportCanvas />
      <header className="relative flex h-[27px] items-center gap-[6px] bg-[#353535]/75 pb-[3px] pl-2">
        <MenuButton icon="view3d" label="Editor type" />
        <Dropdown icon="editMode" label="Mode" value="Edit Mode" className="w-[109px]" />
        <Segments items={["selVertex", "selEdge", "selFace"]} active={2} wide />
        <Menus items={["View", "Select", "Add", "Mesh", "Vertex", "Edge", "Face", "UV"]} tight />
        <div className="ml-[17px] flex gap-[6px]">
          <Dropdown icon="axes" label="Orientation" value="Global" className="w-[79px]" />
          <MenuButton icon="link" label="Pivot" />
          <TogglePair icon="magnet" label="Snap" dim second="increment" />
          <TogglePair icon="dotCircle" label="Proportional editing" dim second="falloff" secondDim />
        </div>
        <div className="ml-auto flex gap-[6px]">
          <MenuButton icon="visibility" label="Object visibility" />
          <TogglePair icon="gizmo" label="Gizmos" on />
          <div className={BOX}>
            <button aria-label="Overlays" className="flex h-full w-[18px] items-center justify-center bg-[#4772b3] text-white">
              <Icon name="overlay" />
            </button>
            <button aria-label="Overlay options" className="flex h-full w-[20px] items-center justify-center border-r border-[#3d3d3d] text-[#e0e0e0]">
              <Chevron />
            </button>
            <button aria-label="Mesh edit overlays" className="flex h-full w-[30px] items-center justify-between pr-px pl-[2px] text-[#c8c8c8]">
              <Icon name="editMode" />
              <Chevron />
            </button>
          </div>
          <button aria-label="X-Ray" className="flex size-[19px] items-center justify-center rounded-[4px] bg-[#545454] text-[#e0e0e0]">
            <Icon name="xray" />
          </button>
          <div className="flex w-[46px] overflow-hidden">
            <Segments items={["wire", "solid", "material"]} active={1} />
          </div>
        </div>
      </header>
      <div className="relative flex items-start justify-between">
        <div className="flex rounded-br-md bg-[#353535]/60 pt-[2px] pr-2 pb-[3px] pl-2">
          <Segments items={["modeSet", "modeExtend", "modeSubtract", "modeInvert", "modeIntersect"]} />
        </div>
        <div className="flex items-center gap-[7px] rounded-bl-md bg-[#353535]/60 pt-[2px] pr-[7px] pb-[3px] pl-2">
          <div className="flex items-center gap-[3px] text-[#cfcfcf]">
            <Icon name="butterfly" />
            <div className="flex gap-px overflow-hidden rounded-[4px]">
              {["X", "Y", "Z"].map((a) => (
                <button key={a} className="h-[19px] w-[16px] bg-[#545454] text-[#e0e0e0]">
                  {a}
                </button>
              ))}
            </div>
          </div>
          <button aria-label="Topology mirror" className="flex h-[19px] w-[18px] items-center justify-center rounded-[4px] bg-[#4f4f4f] text-[#9a9a9a]">
            <Icon name="topology" />
          </button>
          <button className={`${BOX} w-[64px] justify-between pr-[2px] pl-[6px] text-[#e0e0e0]`}>
            Options
            <Chevron />
          </button>
        </div>
      </div>
      <div className="relative flex items-start pt-[9px] pr-2 pl-2">
        <ToolShelf
          groups={[
            [["Select", true], ["Cursor"]],
            [["Move"], ["Rotate"], ["Scale", true], ["Transform"]],
            [["Annotate", true], ["Measure"]],
            [["Add Cube", true]],
            [
              ["Extrude", true], ["Inset"], ["Bevel"], ["Loop Cut", true], ["Knife", true], ["Poly Build"],
              ["Spin"], ["Smooth", true], ["Edge Slide", true], ["Shrink/Fatten", true], ["Shear", true], ["Rip", true],
            ],
          ]}
        />
        <div className="-mt-[2px] ml-[18px] leading-[18px] font-semibold text-white [text-shadow:0_1px_2px_#000]">
          <p>User Perspective</p>
          <p>(0) Cylinder</p>
        </div>
        <div className="ml-auto flex flex-col items-end">
          <AxisGizmo />
          <div className="flex flex-col gap-[3px]">
            {["zoom", "hand", "cameraView", "perspective"].map((n) => (
              <NavButton key={n} icon={n} tone="bg-[#2c2c2c]" />
            ))}
          </div>
        </div>
      </div>
      <CollapseTab />
    </section>
  );
}

function SearchBox({ label }) {
  return (
    <label className="flex h-5 w-[115px] items-center gap-[5px] rounded-[4px] border border-[#3d3d3d] bg-[#1d1d1d] pl-[4px] text-[#e0e0e0]">
      <Icon name="search" />
      <input type="search" aria-label={label} placeholder="Search" className="w-full min-w-0 bg-transparent outline-none placeholder:text-[#707070]" />
    </label>
  );
}

function Outliner() {
  return (
    <section className="flex h-[231px] shrink-0 flex-col overflow-hidden rounded-md bg-[#282828] text-[#bdbdbd]">
      <header className="flex h-[26px] shrink-0 items-center gap-[5px] px-2 pb-[2px]">
        <MenuButton icon="outliner" label="Editor type" />
        <MenuButton icon="viewLayer" label="Display mode" />
        <div className="flex flex-1 justify-center pr-8">
          <SearchBox label="Search outliner" />
        </div>
        <MenuButton icon="filter" label="Filter" />
        <button aria-label="New collection" className="flex size-[19px] items-center justify-center rounded-[4px] bg-[#4a4a4a] text-[#c0c0c0]">
          <Icon name="newCollection" />
        </button>
      </header>
      <ul className="flex flex-1 flex-col">
        <li className="flex h-5 items-center pl-5">
          <span className="mr-1 flex size-5 items-center justify-center rounded-[4px] border border-[#6a6a6a] bg-[#4a4a4a] text-[#ececec]">
            <Icon name="collection" />
          </span>
          Scene Collection
        </li>
        <li className="flex h-5 items-center bg-[#2b2b2b] pr-3 pl-[25px]">
          <Chevron className="mr-2 text-[#a8a8a8]" />
          <Icon name="collection" className="mr-[6px] text-[#e6e6e6]" />
          Collection
          <div className="ml-auto flex items-center gap-1 text-[#e6e6e6]">
            <input type="checkbox" defaultChecked aria-label="Exclude from view layer" className="peer sr-only" />
            <svg viewBox="0 0 16 16" className="size-4" aria-hidden="true">
              <rect x="3" y="3" width="11" height="11" rx="1" fill="#e6e6e6" />
              <path d="M5.500 8.500l2.500 2.500 4.500-5" fill="none" stroke="#222" strokeWidth="1.800" />
            </svg>
            <Icon name="eye" />
            <Icon name="camera" />
          </div>
        </li>
        <li className="flex h-5 items-center bg-[#334d80] pr-3 pl-[2px]">
          <Icon name="editMode" className="mr-[10px] text-[#b9c6de]" />
          <span className="mr-[17px] h-[10px] w-px bg-[#7a7f8c]" />
          <Chevron dir="right" className="mr-[5px] text-[#d0d0d0]" />
          <span className="mr-1 flex size-5 items-center justify-center rounded-[4px] border border-[#75809a] bg-[#66708a] text-[#d98b52]">
            <Icon name="object" />
          </span>
          <span className="text-[#e8ad4a]">Cylinder</span>
          <span className="ml-5 flex size-5 items-center justify-center rounded-[4px] border border-[#4a8292] bg-[#28627a] text-[#1fc9a0]">
            <Icon name="mesh" />
          </span>
          <div className="ml-auto flex gap-1 text-[#e0e6f2]">
            <Icon name="eye" />
            <Icon name="camera" />
          </div>
        </li>
        {[0, 1, 2, 3, 4, 5, 6].map((i) => (
          <li key={i} className={`h-5 ${i % 2 === 0 ? "bg-[#2b2b2b]" : "bg-[#282828]"}`} />
        ))}
      </ul>
    </section>
  );
}

function Grip({ className = "" }) {
  return (
    <svg viewBox="0 0 12 6" className={`h-[6px] w-3 ${className}`} fill="currentColor" aria-hidden="true">
      {[0, 3, 6, 9].map((x) => (
        <path key={x} d={`M${x + 1} 1h1v1h-1zM${x + 1} 4h1v1h-1z`} />
      ))}
    </svg>
  );
}

function Panel({ title, open, children }) {
  return (
    <div className="rounded-[4px] bg-[#3d3d3d]">
      <button className="flex h-[25px] w-full items-center gap-[5px] pr-[6px] pl-2 text-[#dcdcdc]">
        <Chevron dir={open ? "down" : "right"} className="text-[#a8a8a8]" />
        {title}
        <Grip className="ml-auto text-[#8a8a8a]" />
      </button>
      {open && <div className="px-[9px] pt-[9px]">{children}</div>}
    </div>
  );
}

function ListEditor({ canAdd }) {
  return (
    <div className="flex gap-[10px]">
      <div className="flex h-[78px] flex-1 items-end rounded-[4px] bg-[#2d2d2d] pb-[6px] pl-[11px] text-[#c8c8c8]">
        <svg viewBox="0 0 7 7" className="size-[7px]" aria-hidden="true">
          <path d="M0 .500l6.500 3-6.500 3z" fill="#c8c8c8" />
        </svg>
        <Grip className="mx-auto" />
      </div>
      <div className="flex w-[18px] flex-col">
        <button aria-label="Add" className={`flex h-[18px] items-center justify-center rounded-t-[4px] ${canAdd ? "bg-[#545454] text-[#ececec]" : "bg-[#484848] text-[#828282]"}`}>
          <Icon name="plus" />
        </button>
        <button aria-label="Remove" className="mt-px flex h-[19px] items-center justify-center rounded-b-[4px] bg-[#484848] text-[#828282]">
          <Icon name="minus" />
        </button>
        <button aria-label="Specials" className="mt-2 flex h-[18px] items-center justify-center rounded-[4px] bg-[#282828] text-[#e0e0e0]">
          <Chevron />
        </button>
      </div>
    </div>
  );
}

const TABS = [
  [["tool", "text-[#b8b8b8]"]],
  [
    ["render", "text-[#b8b8b8]"],
    ["output", "text-[#b8b8b8]"],
    ["viewLayer", "text-[#b8b8b8]"],
    ["scene", "text-[#b8b8b8]"],
    ["world", "text-[#b5535b]"],
  ],
  [
    ["objectBox", "text-[#cd8549]"],
    ["modifier", "text-[#5c82c8]"],
    ["particles", "text-[#5c82c8]"],
    ["physics", "text-[#5c82c8]"],
    ["constraint", "text-[#5c82c8]"],
    ["mesh", "text-[#1fc28f]"],
    ["materialTab", "text-[#b5535b]"],
  ],
];

function Properties() {
  return (
    <section className="flex min-h-0 flex-1 flex-col overflow-hidden rounded-md bg-[#303030]">
      <header className="flex h-[25px] shrink-0 items-center px-2 pb-[2px]">
        <MenuButton icon="properties" label="Editor type" />
        <div className="flex flex-1 justify-center pr-[9px]">
          <SearchBox label="Search properties" />
        </div>
        <button aria-label="Options" className={`${BOX} w-5 justify-center text-[#e0e0e0]`}>
          <Chevron />
        </button>
      </header>
      <div className="flex min-h-0 flex-1">
        <nav className="flex w-7 shrink-0 flex-col gap-[10px] bg-[#1d1d1d] pt-[9px] pl-[2px]">
          {TABS.map((g, i) => (
            <div key={i} className="flex flex-col gap-[2px]">
              {g.map(([n, c]) => (
                <button key={n} aria-label={n} className={`flex h-[26px] items-center justify-center rounded-l-[4px] ${n === "mesh" ? "bg-[#303030]" : ""} ${c}`}>
                  <Icon name={n} />
                </button>
              ))}
            </div>
          ))}
        </nav>
        <div className="min-w-0 flex-1 pr-[7px] pl-2 text-[#e0e0e0]">
          <div className="flex h-9 items-center pr-[2px] pl-[2px]">
            <Icon name="objectBox" className="mr-2" />
            Cylinder
            <Chevron dir="right" className="mr-2 ml-[14px]" />
            <Icon name="mesh" className="mr-2" />
            Cylinder
            <Icon name="pin" className="ml-auto text-[#a0a0a0]" />
          </div>
          <div className="mt-2 flex h-5 overflow-hidden rounded-[4px] border border-[#3d3d3d]">
            <button aria-label="Browse mesh data" className="flex w-[31px] items-center justify-between border-r border-[#3d3d3d] bg-[#282828] pr-px pl-[3px]">
              <Icon name="mesh" />
              <Chevron />
            </button>
            <input aria-label="Mesh name" defaultValue="Cylinder" className="min-w-0 flex-1 bg-[#1d1d1d] pl-[7px] outline-none" />
            <button aria-label="Fake user" className="flex w-5 items-center justify-center bg-[#545454] text-[#9a9a9a]">
              <Icon name="shield" />
            </button>
          </div>
          <div className="mt-[10px] flex flex-col gap-[2px]">
            <Panel title="Vertex Groups" open>
              <div className="pb-[9px]">
                <ListEditor canAdd />
              </div>
            </Panel>
            <Panel title="Shape Keys" open>
              <ListEditor />
              <label className="flex h-[34px] items-center gap-1 pb-[2px]">
                <input type="checkbox" className="size-3 appearance-none rounded-[2px] bg-[#545454]" />
                Add Rest Position
              </label>
            </Panel>
            {["UV Maps", "Color Attributes", "Attributes", "Texture Space", "Remesh", "Geometry Data", "Custom Properties"].map((t) => (
              <Panel key={t} title={t} />
            ))}
          </div>
        </div>
      </div>
    </section>
  );
}

export default function App() {
  return (
    <div className="flex h-screen flex-col overflow-hidden bg-[#181818] px-px pt-[3px] font-['Inter',sans-serif] text-[11px] leading-4">
      <main className="grid min-h-0 flex-1 grid-cols-[1067fr_1043fr_442fr] gap-[3px]">
        <UvEditor />
        <Viewport />
        <div className="flex min-h-0 min-w-0 flex-col gap-[3px]">
          <Outliner />
          <Properties />
        </div>
      </main>
      <footer className="flex h-[6px] items-end gap-[203px] overflow-hidden pl-[11px]">
        {[0, 1, 2].map((i) => (
          <span key={i} className="h-[2px] w-[9px] rounded-t-full border-t border-[#8f8f8f]" />
        ))}
      </footer>
    </div>
  );
}
